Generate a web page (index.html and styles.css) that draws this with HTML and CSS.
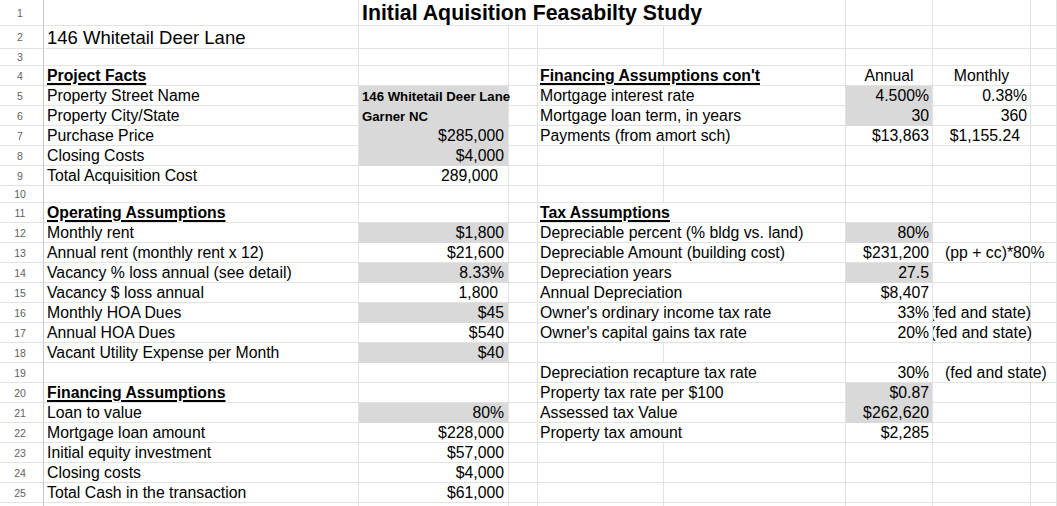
FILE: index.html
```html
<!DOCTYPE html>
<html lang="en">
<head>
<meta charset="utf-8">
<title>Initial Aquisition Feasabilty Study</title>
<link rel="stylesheet" href="styles.css">
</head>
<body>
<div class="sheet">
  <!-- row 1 -->
  <div class="n">1</div><div class="c"></div><div class="c s4 title">Initial Aquisition Feasabilty Study</div><div class="c"></div><div class="c"></div><div class="c"></div>
  <!-- row 2 -->
  <div class="n">2</div><div class="c big">146 Whitetail Deer Lane</div><div class="c"></div><div class="c"></div><div class="c"></div><div class="c"></div><div class="c"></div><div class="c"></div><div class="c"></div>
  <!-- row 3 -->
  <div class="n">3</div><div class="c"></div><div class="c"></div><div class="c"></div><div class="c"></div><div class="c"></div><div class="c"></div><div class="c"></div><div class="c"></div>
  <!-- row 4 -->
  <div class="n">4</div><div class="c h">Project Facts</div><div class="c"></div><div class="c"></div><div class="c s2 h">Financing Assumptions con't</div><div class="c m">Annual</div><div class="c m">Monthly</div><div class="c"></div>
  <!-- row 5 -->
  <div class="n">5</div><div class="c">Property Street Name</div><div class="c g sb">146 Whitetail Deer Lane</div><div class="c"></div><div class="c s2">Mortgage interest rate</div><div class="c g r">4.500%</div><div class="c r">0.38%</div><div class="c"></div>
  <!-- row 6 -->
  <div class="n">6</div><div class="c">Property City/State</div><div class="c g sb">Garner NC</div><div class="c"></div><div class="c s2">Mortgage loan term, in years</div><div class="c g r">30</div><div class="c r">360</div><div class="c"></div>
  <!-- row 7 -->
  <div class="n">7</div><div class="c">Purchase Price</div><div class="c g r rb">$285,000</div><div class="c"></div><div class="c s2">Payments (from amort sch)</div><div class="c r">$13,863</div><div class="c r acc">$1,155.24</div><div class="c"></div>
  <!-- row 8 -->
  <div class="n">8</div><div class="c">Closing Costs</div><div class="c g r rb">$4,000</div><div class="c"></div><div class="c"></div><div class="c"></div><div class="c"></div><div class="c"></div><div class="c"></div>
  <!-- row 9 -->
  <div class="n">9</div><div class="c">Total Acquisition Cost</div><div class="c r acc">289,000</div><div class="c"></div><div class="c"></div><div class="c"></div><div class="c"></div><div class="c"></div><div class="c"></div>
  <!-- row 10 -->
  <div class="n">10</div><div class="c"></div><div class="c"></div><div class="c"></div><div class="c"></div><div class="c"></div><div class="c"></div><div class="c"></div><div class="c"></div>
  <!-- row 11 -->
  <div class="n">11</div><div class="c h">Operating Assumptions</div><div class="c"></div><div class="c"></div><div class="c s2 h">Tax Assumptions</div><div class="c"></div><div class="c"></div><div class="c"></div>
  <!-- row 12 -->
  <div class="n">12</div><div class="c">Monthly rent</div><div class="c g r rb">$1,800</div><div class="c"></div><div class="c s2">Depreciable percent (% bldg vs. land)</div><div class="c g r">80%</div><div class="c"></div><div class="c"></div>
  <!-- row 13 -->
  <div class="n">13</div><div class="c">Annual rent (monthly rent x 12)</div><div class="c r rb">$21,600</div><div class="c"></div><div class="c s2">Depreciable Amount (building cost)</div><div class="c r">$231,200</div><div class="c s2 ind">(pp + cc)*80%</div>
  <!-- row 14 -->
  <div class="n">14</div><div class="c">Vacancy % loss annual (see detail)</div><div class="c g r rb">8.33%</div><div class="c"></div><div class="c s2">Depreciation years</div><div class="c g r">27.5</div><div class="c"></div><div class="c"></div>
  <!-- row 15 -->
  <div class="n">15</div><div class="c">Vacancy $ loss annual</div><div class="c r acc">1,800</div><div class="c"></div><div class="c s2">Annual Depreciation</div><div class="c r">$8,407</div><div class="c"></div><div class="c"></div>
  <!-- row 16 -->
  <div class="n">16</div><div class="c">Monthly HOA Dues</div><div class="c g r rb">$45</div><div class="c"></div><div class="c s2">Owner's ordinary income tax rate</div><div class="c r">33%</div><div class="c clip"><span>(fed and state)</span></div><div class="c"></div>
  <!-- row 17 -->
  <div class="n">17</div><div class="c">Annual HOA Dues</div><div class="c r rb">$540</div><div class="c"></div><div class="c s2">Owner's capital gains tax rate</div><div class="c r">20%</div><div class="c clip clip2"><span>(fed and state)</span></div><div class="c"></div>
  <!-- row 18 -->
  <div class="n">18</div><div class="c">Vacant Utility Expense per Month</div><div class="c g r rb">$40</div><div class="c"></div><div class="c"></div><div class="c"></div><div class="c"></div><div class="c"></div><div class="c"></div>
  <!-- row 19 -->
  <div class="n">19</div><div class="c"></div><div class="c"></div><div class="c"></div><div class="c s2">Depreciation recapture tax rate</div><div class="c r">30%</div><div class="c s2 ind">(fed and state)</div>
  <!-- row 20 -->
  <div class="n">20</div><div class="c h">Financing Assumptions</div><div class="c"></div><div class="c"></div><div class="c s2">Property tax rate per $100</div><div class="c g r">$0.87</div><div class="c"></div><div class="c"></div>
  <!-- row 21 -->
  <div class="n">21</div><div class="c">Loan to value</div><div class="c g r rb">80%</div><div class="c"></div><div class="c s2">Assessed tax Value</div><div class="c g r">$262,620</div><div class="c"></div><div class="c"></div>
  <!-- row 22 -->
  <div class="n">22</div><div class="c">Mortgage loan amount</div><div class="c r rb">$228,000</div><div class="c"></div><div class="c s2">Property tax amount</div><div class="c r">$2,285</div><div class="c"></div><div class="c"></div>
  <!-- row 23 -->
  <div class="n">23</div><div class="c">Initial equity investment</div><div class="c r rb">$57,000</div><div class="c"></div><div class="c"></div><div class="c"></div><div class="c"></div><div class="c"></div><div class="c"></div>
  <!-- row 24 -->
  <div class="n">24</div><div class="c">Closing costs</div><div class="c r rb">$4,000</div><div class="c"></div><div class="c"></div><div class="c"></div><div class="c"></div><div class="c"></div><div class="c"></div>
  <!-- row 25 -->
  <div class="n">25</div><div class="c">Total Cash in the transaction</div><div class="c r rb">$61,000</div><div class="c"></div><div class="c"></div><div class="c"></div><div class="c"></div><div class="c"></div><div class="c"></div>
  <!-- row 26 -->
  <div class="n"></div><div class="c"></div><div class="c"></div><div class="c"></div><div class="c"></div><div class="c"></div><div class="c"></div><div class="c"></div><div class="c"></div>
</div>
</body>
</html>
```

FILE: styles.css
```css
html, body {
  margin: 0;
  padding: 0;
  background: #ffffff;
}

body {
  font-family: "Liberation Sans", Arial, sans-serif;
  color: #000000;
  overflow: hidden;
}

.sheet {
  display: grid;
  grid-template-columns: 44px 315px 150px 29px 126px 182px 87px 98px 1fr;
  grid-template-rows: 26px 23px 17px 20px repeat(5, 20px) 17px repeat(15, 20px) 4px;
  width: 1057px;
  height: 506px;
  overflow: hidden;
}

.n {
  display: flex;
  align-items: center;
  justify-content: center;
  padding-right: 3px;
  font-size: 10.5px;
  color: #5f5f5f;
  border-right: 1px solid #c8c8c8;
  border-bottom: 1px solid #e2e2e2;
}

.c {
  display: flex;
  align-items: flex-end;
  min-width: 0;
  padding: 0 3px 1px 3px;
  font-size: 15.8px;
  line-height: 17px;
  white-space: nowrap;
  border-right: 1px solid #e2e2e2;
  border-bottom: 1px solid #e2e2e2;
  position: relative;
}

.s2 { grid-column: span 2; padding-left: 2px; }
.s4 { grid-column: span 4; }

.title {
  font-weight: bold;
  font-size: 21.3px;
  line-height: 24px;
  padding-bottom: 0;
}

.big {
  font-size: 18.5px;
  line-height: 20px;
  padding-bottom: 0;
}

.h {
  font-weight: bold;
  text-decoration: underline;
  text-decoration-thickness: 1.5px;
  text-underline-offset: 2px;
}

.g {
  background: #d9d9d9;
  border-bottom-color: #d9d9d9;
}

.sb {
  font-weight: bold;
  font-size: 13.2px;
  padding-bottom: 0;
  overflow: visible;
  z-index: 1;
}

.r { justify-content: flex-end; }
.rb { padding-right: 4px; }
.acc { padding-right: 10px; }
.m { justify-content: center; }

.ind { padding-left: 12px; }

.clip {
  justify-content: flex-end;
  padding-right: 0;
  clip-path: inset(0 -30px 0 0);
}

.clip span {
  flex: none;
  margin-right: -1px;
}

.clip2 span {
  margin-right: -2px;
}
```
